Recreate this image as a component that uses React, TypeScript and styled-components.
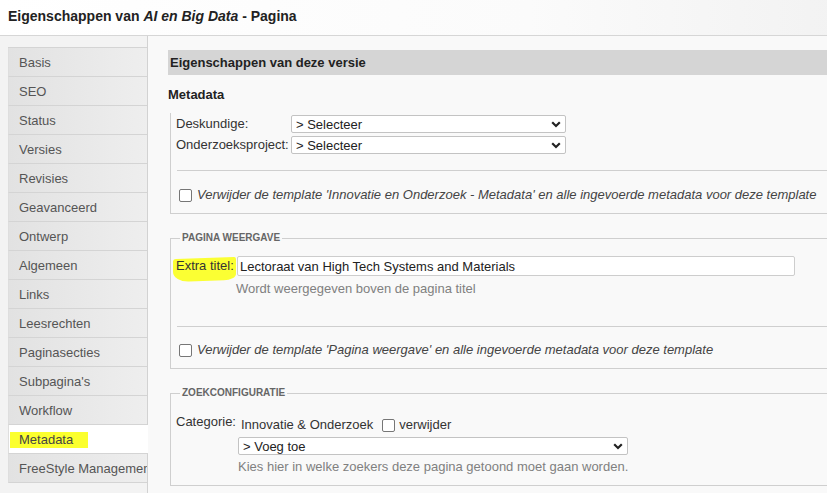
import React from "react";
import styled, { createGlobalStyle } from "styled-components";

const Global = createGlobalStyle`
  html, body { margin: 0; padding: 0; overflow: hidden; background: #f9f9f9; }
  body { font-family: "Liberation Sans", Arial, sans-serif; font-size: 13px; color: #333; }
`;

const Page = styled.div`
  width: 880px;
  height: 493px;
  display: flex;
  flex-direction: column;
`;

const Header = styled.header`
  height: 36px;
  flex: none;
  border-bottom: 1px solid #d6d6d6;
  background: linear-gradient(to right, #ffffff 0%, #fbfbfb 60%, #f1f1f1 100%);
  display: flex;
  align-items: center;
  padding-left: 8px;
  padding-bottom: 4px;
  box-sizing: border-box;
`;

const Title = styled.h1`
  margin: 0;
  font-size: 14px;
  font-weight: bold;
  color: #222;
  em { font-style: italic; }
`;

const Body = styled.div`
  flex: 1;
  display: flex;
  min-height: 0;
`;

const Sidebar = styled.nav`
  width: 148px;
  flex: none;
  box-sizing: border-box;
  background: #f3f3f3;
  border-right: 1px solid #d2d2d2;
  padding: 11px 0 0 8px;
`;

const NavList = styled.ul`
  list-style: none;
  margin: 0;
  padding: 0;
  border-top: 1px solid #d4d4d4;
`;

const NavItem = styled.li<{ $active?: boolean }>`
  height: 28px;
  line-height: 29px;
  border-bottom: 1px solid #d4d4d4;
  border-left: 1px solid #dedede;
  padding-left: 10px;
  color: #555;
  white-space: nowrap;
  overflow: hidden;
  background: ${(p) => (p.$active ? "#ffffff" : "linear-gradient(to right, #e2e2e2, #eeeeee)")};
  margin-right: ${(p) => (p.$active ? "-1px" : "0")};
  position: relative;
`;

const Marker = styled.span`
  background: #fbff2e;
  color: #444;
  display: inline-block;
  line-height: 16px;
  padding: 0 15px 0 9px;
  margin-left: -9px;
`;

const Main = styled.main`
  flex: 1;
  background: #f9f9f9;
  padding: 14px 0 0 20px;
  min-width: 0;
`;

const SectionBar = styled.div`
  height: 25px;
  line-height: 26px;
  background: #d5d5d5;
  font-weight: bold;
  color: #222;
  padding-left: 2px;
`;

const SubHeading = styled.h2`
  margin: 12px 0 10px;
  font-size: 13px;
  line-height: 16px;
  font-weight: bold;
  color: #222;
`;

const Fieldset = styled.fieldset<{ $noTop?: boolean; $padTop?: number }>`
  margin: ${(p) => (p.$noTop ? "0" : "18px")} 0 0 2px;
  padding: ${(p) => (p.$noTop ? 2 : p.$padTop ?? 12)}px 0 10px 5px;
  border: 1px solid #cfcfcf;
  border-right: none;
  ${(p) => (p.$noTop ? "border-top: none;" : "")}
  min-width: 0;
`;

const Legend = styled.legend`
  font-size: 10px;
  line-height: 12px;
  font-weight: bold;
  color: #666;
  padding: 0 2px;
  margin-left: 4px;
  text-transform: uppercase;
`;

const FormGrid = styled.div<{ $cols: string; $rowGap?: number }>`
  display: grid;
  grid-template-columns: ${(p) => p.$cols};
  column-gap: 3px;
  row-gap: ${(p) => p.$rowGap ?? 3}px;
  align-items: center;
`;

const Label = styled.label`
  color: #333;
  line-height: 16px;
  white-space: nowrap;
`;

const HighlightLabel = styled(Label)`
  position: relative;
  z-index: 0;
  &::before {
    content: "";
    position: absolute;
    z-index: -1;
    left: -3px;
    right: -2px;
    top: 0px;
    bottom: -7px;
    background: #fbff33;
    border-radius: 3px 2px 12px 16px / 3px 2px 6px 10px;
    transform: skewY(-2deg);
  }
`;

const SelectWrap = styled.div<{ $width: number }>`
  position: relative;
  width: ${(p) => p.$width}px;
  height: 18px;
`;

const Select = styled.select`
  appearance: none;
  -webkit-appearance: none;
  width: 100%;
  height: 18px;
  box-sizing: border-box;
  border: 1px solid #c3c3c3;
  border-radius: 2px;
  background: #fff;
  padding: 0 22px 0 4px;
  font-family: "Liberation Sans", Arial, sans-serif;
  font-size: 13px;
  color: #222;
  outline: none;
`;

const Chevron = styled.svg`
  position: absolute;
  right: 5px;
  top: 6px;
  pointer-events: none;
`;

const TextInput = styled.input`
  width: 558px;
  height: 20px;
  box-sizing: border-box;
  border: 1px solid #cdcdcd;
  border-radius: 2px;
  background: #fff;
  padding: 0 2px;
  font-family: "Liberation Sans", Arial, sans-serif;
  font-size: 13px;
  color: #222;
  outline: none;
`;

const Divider = styled.hr<{ $top: number }>`
  border: none;
  border-top: 1px solid #cfcfcf;
  margin: ${(p) => p.$top}px 0 0 1px;
  height: 0;
`;

const CheckRow = styled.label<{ $top: number }>`
  display: flex;
  align-items: center;
  gap: 5px;
  margin-top: ${(p) => p.$top}px;
  padding-left: 3px;
  line-height: 16px;
  font-style: italic;
  color: #444;
  white-space: nowrap;
`;

const Check = styled.input`
  appearance: none;
  -webkit-appearance: none;
  width: 13px;
  height: 13px;
  margin: 0;
  box-sizing: border-box;
  border: 1px solid #767676;
  border-radius: 2px;
  background: #fff;
  flex: none;
`;

const Help = styled.div<{ $top: number; $left?: number }>`
  color: #808080;
  line-height: 16px;
  margin-top: ${(p) => p.$top}px;
  margin-left: ${(p) => p.$left ?? 0}px;
  white-space: nowrap;
`;

const CatColumn = styled.div`
  display: flex;
  flex-direction: column;
`;

const CatLine = styled.div`
  display: flex;
  align-items: center;
  gap: 4px;
  margin-top: 3px;
  padding-left: 3px;
  line-height: 16px;
  color: #333;
`;

const InlineCheck = styled.label`
  display: inline-flex;
  align-items: center;
  gap: 4px;
  margin-left: 5px;
`;

const TopLabel = styled(Label)`
  align-self: start;
`;

const SelectSpacer = styled.div`
  margin-top: 4px;
`;

const DropSelect = ({ width, value }: { width: number; value: string }) => (
  <SelectWrap $width={width}>
    <Select defaultValue={value}>
      <option>{value}</option>
    </Select>
    <Chevron width="10" height="7" viewBox="0 0 10 7">
      <path d="M1.2 1.3 L5 5 L8.8 1.3" fill="none" stroke="#222" strokeWidth="2.2" />
    </Chevron>
  </SelectWrap>
);

const navItems = [
  "Basis",
  "SEO",
  "Status",
  "Versies",
  "Revisies",
  "Geavanceerd",
  "Ontwerp",
  "Algemeen",
  "Links",
  "Leesrechten",
  "Paginasecties",
  "Subpagina's",
  "Workflow",
  "Metadata",
  "FreeStyle Management",
];

export default function App() {
  return (
    <Page>
      <Global />
      <Header>
        <Title>
          Eigenschappen van <em>AI en Big Data</em> - Pagina
        </Title>
      </Header>
      <Body>
        <Sidebar>
          <NavList>
            {navItems.map((n) =>
              n === "Metadata" ? (
                <NavItem key={n} $active>
                  <Marker>{n}</Marker>
                </NavItem>
              ) : (
                <NavItem key={n}>{n}</NavItem>
              )
            )}
          </NavList>
        </Sidebar>
        <Main>
          <SectionBar>Eigenschappen van deze versie</SectionBar>
          <SubHeading>Metadata</SubHeading>

          <Fieldset $noTop>
            <FormGrid $cols="112px 275px">
              <Label>Deskundige:</Label>
              <DropSelect width={275} value="> Selecteer" />
              <Label>Onderzoeksproject:</Label>
              <DropSelect width={275} value="> Selecteer" />
            </FormGrid>
            <Divider $top={16} />
            <CheckRow $top={16}>
              <Check type="checkbox" />
              Verwijder de template 'Innovatie en Onderzoek - Metadata' en alle ingevoerde metadata voor deze template
            </CheckRow>
          </Fieldset>

          <Fieldset>
            <Legend>Pagina weergave</Legend>
            <FormGrid $cols="58px 558px">
              <HighlightLabel>Extra titel:</HighlightLabel>
              <TextInput defaultValue="Lectoraat van High Tech Systems and Materials" />
            </FormGrid>
            <Help $top={5} $left={60}>Wordt weergegeven boven de pagina titel</Help>
            <Divider $top={29} />
            <CheckRow $top={15}>
              <Check type="checkbox" />
              Verwijder de template 'Pagina weergave' en alle ingevoerde metadata voor deze template
            </CheckRow>
          </Fieldset>

          <Fieldset $padTop={15}>
            <Legend>Zoekconfiguratie</Legend>
            <FormGrid $cols="59px 390px">
              <TopLabel>Categorie:</TopLabel>
              <CatColumn>
                <CatLine>
                  Innovatie &amp; Onderzoek
                  <InlineCheck>
                    <Check type="checkbox" />
                    verwijder
                  </InlineCheck>
                </CatLine>
                <SelectSpacer>
                  <DropSelect width={390} value="> Voeg toe" />
                </SelectSpacer>
                <Help $top={4}>Kies hier in welke zoekers deze pagina getoond moet gaan worden.</Help>
              </CatColumn>
            </FormGrid>
          </Fieldset>
        </Main>
      </Body>
    </Page>
  );
}
